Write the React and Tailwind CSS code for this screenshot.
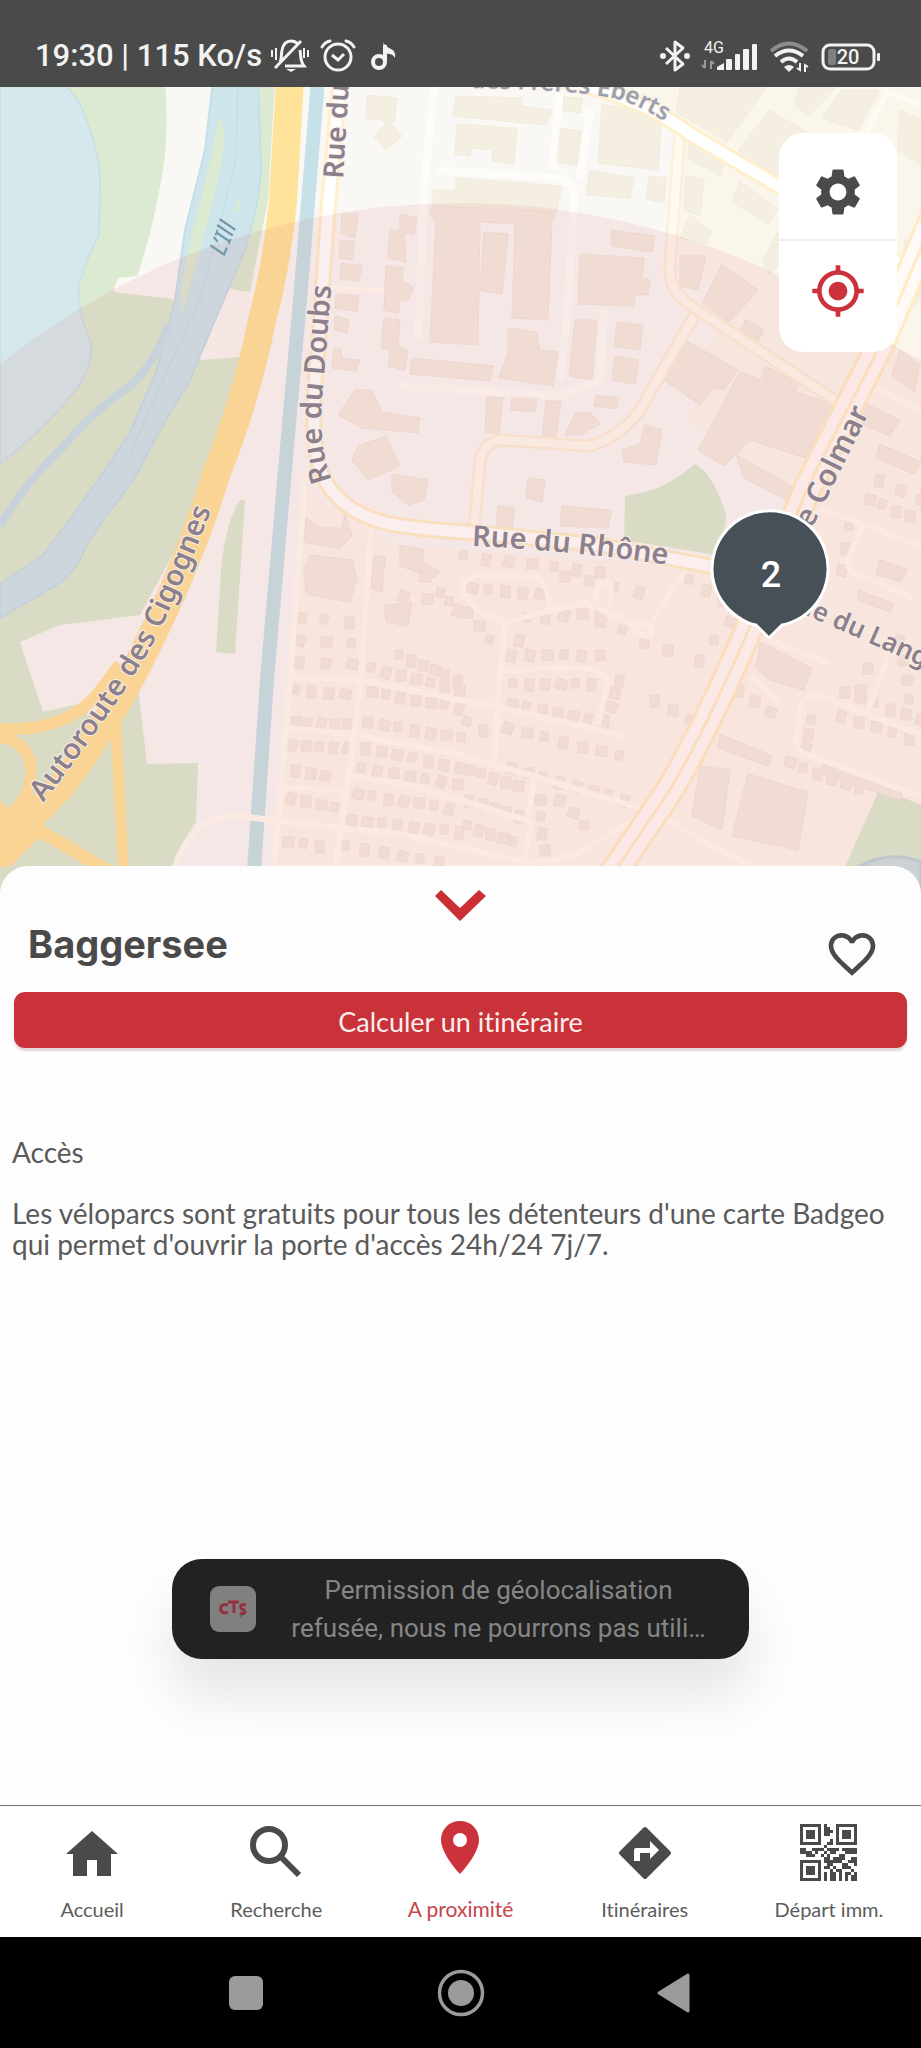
import React from "react";
import { MdSettings, MdGpsFixed, MdFavoriteBorder } from "react-icons/md";

/* ---------- Map data (user units follow the screen grid) ---------- */

const BUILDINGS_LIGHT = [
  "367,95 397,98 394,122 366,118",
  "388,120 402,136 386,150 374,137",
  "456,96 522,98 522,106 552,110 546,125 453,116",
  "457,124 517,128 514,164 492,161 493,150 472,148 470,156 455,154",
  "564,97 582,98 580,113 563,110",
  "560,128 581,131 577,166 556,162",
  "602,104 662,114 658,170 598,163",
  "590,170 634,178 630,198 586,195",
  "649,176 666,178 664,203 646,199",
  "456,178 562,186 556,212 432,206 434,190 456,190",
  "680,88 765,88 728,142 676,112",
  "770,110 806,132 780,180 738,150",
  "690,140 726,158 720,176 688,158",
  "686,176 704,180 700,215 684,210",
  "740,182 778,208 768,224 732,202",
  "800,88 836,88 808,116 794,104",
  "842,90 880,90 858,130 822,118",
  "690,215 712,232 706,244 680,238",
  "900,110 921,120 921,165 898,150",
  "905,240 921,246 921,300 896,320",
  "780,228 800,240 770,275 762,262",
];

const BUILDINGS_DARK = [
  "432,206 556,212 552,222 548,320 512,318 515,224 480,222 478,345 430,342 436,222 430,214",
  "484,232 508,234 502,294 480,290",
  "342,214 358,214 355,238 341,234",
  "340,240 355,242 352,260 339,258",
  "341,263 362,266 359,281 340,279",
  "336,294 359,296 357,312 335,308",
  "335,316 349,320 347,333 334,330",
  "334,348 341,350 342,358 360,360 356,371 332,368",
  "400,214 417,218 414,234 404,232 406,262 388,258 390,230 400,230",
  "386,266 404,268 402,280 414,288 408,300 400,300 398,314 384,310",
  "384,318 400,320 398,346 408,350 405,370 388,366 390,350 381,348",
  "412,358 494,366 490,381 410,374",
  "508,328 536,332 540,350 558,352 553,386 499,378 508,352",
  "611,230 655,236 652,252 612,246",
  "580,254 644,258 642,278 650,280 648,295 635,294 634,306 578,304",
  "575,320 597,320 592,380 569,376",
  "617,322 643,325 640,350 614,346",
  "615,356 639,360 635,384 612,380",
  "487,396 503,398 499,434 485,432",
  "512,396 537,398 535,412 511,410",
  "546,400 561,402 556,438 542,435",
  "575,413 590,412 600,424 582,434 565,436",
  "596,395 619,398 616,409 594,406",
  "355,390 372,390 382,412 420,418 418,433 362,428 338,415",
  "358,446 386,436 400,466 368,480 352,460",
  "392,474 428,480 424,500 408,505 392,492",
  "680,256 706,256 698,290 680,286",
  "722,265 758,290 730,322 702,303",
  "685,340 738,370 724,390 712,388 700,405 664,380",
  "740,372 834,405 806,458 750,440 724,466 698,450",
  "746,320 764,330 756,345 738,335",
  "765,366 800,384 794,392 762,378",
  "645,425 662,430 656,465 624,462 622,450 640,444",
  "498,506 515,508 512,528 496,526",
  "528,478 545,480 542,502 526,498",
  "562,506 612,510 608,528 560,526",
  "736,455 792,486 786,500 744,478",
  "306,518 322,528 342,528 345,514 352,536 340,548 304,542",
  "310,555 352,560 357,578 350,602 306,594 304,570",
  "374,555 385,557 382,592 371,588",
  "700,766 730,770 722,830 692,816",
  "748,774 808,792 798,850 732,836",
  "720,734 772,756 768,766 718,748",
  "760,642 786,655 812,668 804,690 770,680 756,668",
  "858,590 894,604 890,612 858,600",
  "880,560 908,570 900,582 876,574",
  "824,762 902,790 900,800 820,774",
  "900,350 921,360 914,392 892,376",
  "858,400 900,420 890,436 862,424",
  "880,444 921,462 914,474 876,458",
  "400,545 424,550 422,562 440,572 434,578 400,566",
  "384,606 412,602 408,626 386,622",
];

const FILLERS = [
  [400, 655, 458, 680, 6], [300, 618, 350, 622, 3], [300, 640, 352, 644, 3], [300, 662, 352, 664, 3],
  [296, 690, 345, 694, 4], [296, 722, 348, 724, 5], [292, 745, 348, 748, 5], [296, 770, 325, 776, 3],
  [372, 668, 460, 690, 7], [372, 692, 460, 708, 7], [368, 722, 462, 738, 7], [366, 748, 460, 768, 7],
  [362, 768, 458, 784, 7], [358, 794, 450, 808, 7], [352, 820, 460, 832, 8], [292, 798, 335, 808, 4],
  [464, 556, 600, 572, 7], [472, 588, 540, 594, 5], [468, 612, 490, 640, 3], [520, 640, 525, 650, 1],
  [528, 618, 600, 612, 5], [600, 622, 668, 650, 4], [565, 576, 640, 592, 4], [512, 655, 600, 655, 6],
  [514, 684, 592, 684, 6], [512, 704, 604, 722, 7], [508, 728, 620, 756, 7], [620, 680, 606, 720, 4],
  [468, 722, 484, 730, 2], [470, 770, 518, 786, 5], [512, 768, 625, 800, 8], [470, 800, 520, 816, 5],
  [468, 826, 514, 842, 5], [540, 800, 545, 850, 4], [560, 800, 585, 826, 3], [655, 700, 690, 720, 3],
  [690, 580, 740, 610, 4], [730, 622, 700, 660, 3], [845, 692, 921, 720, 6], [842, 716, 910, 738, 5],
  [812, 720, 806, 748, 3], [790, 762, 860, 790, 6], [868, 668, 860, 690, 2], [900, 640, 910, 700, 4],
  [850, 526, 842, 570, 3], [870, 500, 910, 516, 4], [408, 560, 458, 610, 4], [880, 480, 921, 500, 3],
  [346, 846, 440, 862, 6], [288, 842, 320, 846, 3], [404, 596, 450, 602, 3], [740, 690, 770, 712, 3],
];

const MINOR_ROADS = [
  "M305 478 L290 680 L274 870",
  "M371 528 L360 690 L345 800 L335 870",
  "M290 677 L360 680 L400 688 L460 700 L520 712 L625 736",
  "M287 728 L358 735 L460 755 L530 775 L652 812",
  "M282 787 L345 791",
  "M352 777 L400 783 L460 800 L532 822 L522 870",
  "M174 870 Q190 816 238 816 L340 828 L400 834 L525 862 Q560 866 600 840 L650 810",
  "M505 622 L500 672 L494 762",
  "M500 672 Q550 666 590 669 Q608 672 606 690 L598 725",
  "M462 590 Q464 574 485 575 L535 577 Q548 580 550 610",
  "M462 590 Q475 615 505 622 L585 602 L636 625 L650 625 L688 566",
  "M636 624 L652 626 L650 636 L635 634 Z",
  "M595 602 L598 582 L611 584 L610 606",
  "M535 775 L528 815",
  "M770 640 L828 664",
  "M750 676 L780 702",
  "M921 735 L820 696 Q804 692 800 712 L796 742 Q796 752 812 756 L921 797",
  "M888 658 L868 710",
  "M820 508 L921 546",
  "M862 526 L848 560 Q846 570 858 574 L912 598",
  "M665 818 Q700 840 750 866",
  "M870 385 L921 412",
  "M330 288 L384 291",
  "M921 106 L880 88",
  "M888 90 L866 132",
];

const WHITE_ROADS = [
  "M434 87 L424 190 L418 340",
  "M440 168 Q440 172 470 172 L560 178 Q576 182 574 205 L566 330 L560 380",
  "M560 90 L552 170",
  "M590 110 L580 180",
  "M400 386 L560 396 L600 380 L604 310",
];

const MAIN_ROADS = [
  "M340 80 L328 210 L318 350 Q308 440 322 474 Q338 512 390 524 Q425 530 480 533 L600 545 L720 568",
  "M560 80 Q640 96 690 134 L785 190 L921 278",
];

const SECONDARY_ROADS = [
  "M680 130 L670 265 Q668 290 690 305 L840 404",
  "M694 316 L640 410 Q622 436 590 446 L500 440 Q482 444 480 462 L474 530",
];

function houseRows() {
  return FILLERS.flatMap(([x1, y1, x2, y2, n], row) =>
    Array.from({ length: n }, (_, i) => {
      const t = n === 1 ? 0 : i / (n - 1);
      const x = Math.round(x1 + (x2 - x1) * t);
      const y = Math.round(y1 + (y2 - y1) * t);
      const w = 8 + ((i * 5 + row * 3) % 4);
      const h = 9 + ((i * 3 + row) % 4);
      return (
        <rect key={`${row}-${i}`} x={x - 5} y={y - 5} width={w} height={h} transform={`rotate(${((i * 7 + row * 11) % 24) - 4} ${x} ${y})`} />
      );
    }),
  );
}

function CityMap() {
  return (
    <svg className="absolute inset-0 h-full w-full" viewBox="0 87 921 807" preserveAspectRatio="xMidYMin slice" role="img" aria-label="Carte du quartier">
      <rect x="0" y="80" width="921" height="820" fill="#faf8f5" />
      <path d="M400 545 L318 500 L304 470 L274 900 H921 V300 L860 380 L800 500 L720 570 Z" fill="#fcf5ee" />
      <path d="M560 80 L921 80 V330 L800 500 L690 420 L720 300 L670 240 L680 130 Z" fill="#fbf6ec" />

      {/* green areas */}
      <g fill="#dcead1">
        <path d="M55 80 H165 Q169 130 163 170 Q152 235 137 276 L118 278 L113 292 L172 299 L200 360 L240 357 L216 475 L140 615 L60 625 L20 642 L43 712 L95 700 L40 800 L0 860 V440 L90 350 L70 290 L100 170 Z" />
        <path d="M255 80 H275 L268 200 L250 292 L215 288 Z" />
        <path d="M0 740 L100 712 L116 690 L138 686 L147 764 L198 763 L196 822 Q180 840 174 900 H0 Z" />
        <path d="M240 500 L245 500 L235 654 L216 652 L221 570 Q226 520 240 500 Z" />
        <path d="M625 496 L645 492 Q668 486 695 464 Q712 472 726 514 L722 556 L624 540 Z" />
        <path d="M880 788 L921 805 V900 H830 Z" />
      </g>
      <path d="M228 288 L250 293 L241 357 L205 353 Z" fill="#faf7f3" />

      {/* water */}
      <path d="M0 80 H60 Q78 96 84 114 Q99 150 100 180 L99 235 Q86 260 79 285 Q78 315 90 340 Q96 356 80 384 Q50 425 0 464 Z" fill="#d5e9ec" stroke="#cbe0e8" strokeWidth="2" />
      <path d="M213 80 L205 150 L185 230 L175 300 L165 340 L155 375 L130 432 L100 477 L68 522 L42 556 L0 584 V618 L58 584 Q76 572 86 546 L102 522 L135 478 L160 430 L190 380 L215 320 L245 250 Q259 205 261 170 L258 80 Z" fill="#cfe5ec" stroke="#c5dfe8" strokeWidth="2" />
      <path d="M168 325 Q156 362 130 386 Q92 412 62 448 Q24 484 0 526" fill="none" stroke="#c8e0ea" strokeWidth="8" />
      <path d="M238 80 L236 160 L200 300 L165 375 L130 455" fill="none" stroke="#c6dfe9" strokeWidth="2" />
      <path d="M218 116 Q230 130 219 175 Q204 240 182 312 Q178 290 195 220 Q212 160 218 116 Z" fill="#dcead1" />
      <path d="M240 195 L241 208 L234 214 Z" fill="#dcead1" />
      <path d="M318 80 L300 300 L285 470 L267 680 L252 900" fill="none" stroke="#c6e2e8" strokeWidth="14" />
      <path d="M860 866 Q890 850 921 862 V900 H850 Z" fill="#cddfe2" stroke="#bcd3dc" strokeWidth="3" />

      {/* motorway */}
      <g fill="none" stroke="#ffe39b">
        <path d="M290 80 L283 200 Q276 270 262 320 Q246 400 216 475 Q190 560 150 640 Q112 720 62 785 L-20 870" strokeWidth="28" />
        <path d="M20 820 L-10 850" strokeWidth="52" />
        <path d="M0 729 Q64 732 96 696 L120 664" strokeWidth="12" />
        <path d="M-4 736 Q32 742 31 772 Q30 800 4 820" strokeWidth="11" />
        <path d="M117 690 L116 730 L124 880" strokeWidth="11" />
        <path d="M20 820 L66 846 L110 872" strokeWidth="13" />
      </g>

      {/* buildings */}
      <g fill="#f5efe2" stroke="#f0ebdd" strokeWidth="1">
        {BUILDINGS_LIGHT.map((p) => <polygon key={p} points={p} />)}
      </g>
      <g fill="#f5ebe2" stroke="#f1e5db" strokeWidth="1">
        {BUILDINGS_DARK.map((p) => <polygon key={p} points={p} />)}
        {houseRows()}
      </g>

      {/* streets */}
      <g fill="none" strokeLinejoin="round">
        {WHITE_ROADS.map((d) => <path key={d} d={d} stroke="#fffdfb" strokeOpacity="0.7" strokeWidth="8" />)}
        {MINOR_ROADS.map((d) => <path key={d} d={d} stroke="#fffbf2" strokeWidth="6" />)}
        {SECONDARY_ROADS.map((d) => <path key={d} d={d} stroke="#fdefd8" strokeWidth="13" />)}
        {SECONDARY_ROADS.map((d) => <path key={d} d={d} stroke="#fffaf0" strokeWidth="8" />)}
        {MAIN_ROADS.map((d) => <path key={d} d={d} stroke="#ffefcb" strokeWidth="17" />)}
        {MAIN_ROADS.map((d) => <path key={d} d={d} stroke="#ffffff" strokeWidth="11" />)}
        <path d="M595 900 L655 812 Q690 764 745 638 L808 487 L880 345 L935 215" stroke="#ffecc4" strokeWidth="30" />
        <path d="M595 900 L655 812 Q690 764 745 638 L808 487 L880 345 L935 215" stroke="#fffaf8" strokeWidth="24" />
        <path d="M595 900 L655 812 Q690 764 745 638 L808 487 L880 345 L935 215" stroke="#ffecc4" strokeWidth="3" />
      </g>

      {/* search radius */}
      <circle cx="460" cy="940" r="737" fill="rgb(208,90,85)" fillOpacity="0.1" />

      {/* street names */}
      <defs>
        <path id="way-autoroute" d="M43 803 Q130 690 160 630 Q194 560 222 480" />
        <path id="way-doubs" d="M332 480 Q316 440 324 380 L334 250" />
        <path id="way-doubs-north" d="M343 179 L351 50" />
        <path id="way-rhone" d="M472 546 Q570 550 690 568" />
        <path id="way-colmar" d="M803 546 L830 492 L920 310" />
        <path id="way-languedoc" d="M780 604 L840 630 L980 692" />
        <path id="way-eberts" d="M470 88 Q590 90 624 101 Q654 112 710 150" />
      </defs>
      <g fill="#8c808c" fontFamily="'Noto Sans', 'Open Sans', sans-serif" fontWeight="600" fontSize="28" stroke="#faf0ea" strokeWidth="2" paintOrder="stroke">
        <text fontSize="29"><textPath href="#way-autoroute">Autoroute des Cigognes</textPath></text>
        <text fontSize="29"><textPath href="#way-doubs">Rue du Doubs</textPath></text>
        <text><textPath href="#way-doubs-north">Rue du</textPath></text>
        <text fontSize="29"><textPath href="#way-rhone">Rue du Rhône</textPath></text>
        <text fontSize="30"><textPath href="#way-colmar">de Colmar</textPath></text>
        <text fontSize="26"><textPath href="#way-languedoc">Rue du Languedoc</textPath></text>
        <text fontSize="24" fill="#9aa0ab"><textPath href="#way-eberts">des Frères Eberts</textPath></text>
      </g>
      <text transform="translate(224 257) rotate(-68)" fill="#6f95a6" fontFamily="'Noto Sans', sans-serif" fontStyle="italic" fontSize="24">L’Ill</text>

      {/* stop marker */}
      <path d="M769 638 L756 625 Q748 624 738 617 A58 58 0 1 1 802 617 Q790 624 782 625 Z" fill="#485057" stroke="#ffffff" strokeWidth="3" strokeLinejoin="round" />
      <text x="771" y="587" textAnchor="middle" fill="#ffffff" fontFamily="Roboto, sans-serif" fontWeight="500" fontSize="36">2</text>
    </svg>
  );
}

/* ---------- Status bar ---------- */

function StatusBar() {
  return (
    <header className="flex h-[87px] items-end justify-between bg-[#4a4a4a] pr-10 pb-[11px] pl-[35px] text-[#f2f2f2]">
      <div className="flex items-center">
        <span className="text-[31px] leading-10 font-medium">19:30 | 115 Ko/s</span>
        <svg className="ml-2 h-10 w-10" viewBox="0 0 40 40" fill="none" stroke="currentColor" strokeWidth="3" aria-hidden="true">
          <path d="M10 26 C12 23 11 18 12 14 C13 9 16 5 21 5 C24 5 26 6 28 8 M30 14 C31 20 30 25 34 30 H15" />
          <path d="M5 32 L31 5" />
          <path d="M2 14 V21 M6 12 V24 M38 14 V21 M34 12 V22" strokeWidth="2" />
          <path d="M16 33 H26 L21 36 Z" fill="currentColor" stroke="none" />
        </svg>
        <svg className="ml-2 h-10 w-10" viewBox="0 0 40 40" fill="none" stroke="currentColor" strokeWidth="3" aria-hidden="true">
          <circle cx="20" cy="21" r="13" />
          <path d="M14 19 L20 24 L26 18" />
          <path d="M4 11 Q7 6 12 5 M28 5 Q33 6 36 11" strokeLinecap="round" />
        </svg>
        <svg className="ml-2 h-10 w-8" viewBox="0 0 32 40" fill="none" stroke="currentColor" strokeWidth="4" aria-hidden="true">
          <circle cx="13" cy="26" r="6" />
          <path d="M19 26 V9" />
          <path d="M17 6 Q20 11 25 13 Q30 15 29 22 Q26 17 20 18 Z" fill="currentColor" stroke="none" />
        </svg>
      </div>

      <div className="flex items-center">
        <svg className="h-10 w-8" viewBox="0 0 32 40" fill="none" stroke="currentColor" strokeWidth="3" aria-hidden="true">
          <path d="M7 12 L24 28 L16 34 V6 L24 12 L7 28" strokeLinejoin="round" />
          <circle cx="4" cy="20" r="3" fill="currentColor" stroke="none" />
          <circle cx="28" cy="20" r="3" fill="currentColor" stroke="none" />
        </svg>
        <svg className="ml-2 h-10 w-[60px]" viewBox="0 0 60 40" fill="currentColor" aria-label="4G" role="img">
          <text x="5" y="17" fontFamily="Roboto, sans-serif" fontSize="16">4G</text>
          <path d="M6 24 V32 M3 29 L6 32 M12 33 V25 M12 25 L15 28" stroke="#9b9b9b" strokeWidth="2" fill="none" />
          <path d="M18 34 V31 L25 27 V34 Z" />
          <rect x="27" y="23" width="6" height="11" rx="1" />
          <rect x="36" y="18" width="5" height="16" rx="1" />
          <rect x="44" y="13" width="6" height="21" rx="1" />
          <rect x="53" y="8" width="5" height="26" rx="1" />
        </svg>
        <svg className="ml-2 h-10 w-11" viewBox="0 0 44 40" fill="none" stroke="currentColor" strokeWidth="4" aria-hidden="true">
          <path d="M4 15 Q22 0 40 15" stroke="#8d8d8d" />
          <path d="M8 20 Q22 9 36 20" />
          <path d="M14 26 Q22 19 30 26" />
          <path d="M17 31 Q22 27 27 31 L22 36 Z" fill="currentColor" stroke="none" />
          <path d="M33 27 V34 L30 32 M38 36 V29 L41 31" strokeWidth="2" />
        </svg>
        <svg className="ml-2 h-10 w-[62px]" viewBox="0 0 62 40" aria-label="Batterie 20 %" role="img">
          <rect x="4" y="9" width="51" height="24" rx="7" fill="none" stroke="currentColor" strokeWidth="3" />
          <rect x="9" y="13" width="8" height="16" rx="2" fill="#808080" />
          <rect x="58" y="17" width="3" height="8" rx="1" fill="currentColor" />
          <text x="29" y="28" textAnchor="middle" fill="currentColor" fontFamily="Roboto, sans-serif" fontWeight="500" fontSize="20">20</text>
        </svg>
      </div>
    </header>
  );
}

/* ---------- Tab bar ---------- */

const QR_ROWS = [
  "1111111010001111111",
  "1000001011001000001",
  "1011101011101011101",
  "1011101011001011101",
  "1011101000001011101",
  "1000001000101000001",
  "1111111001101111111",
  "0000000010000000000",
  "1100111101111011111",
  "1111010010110001111",
  "0011100101000110000",
  "0000000011011110011",
  "1111111011111100111",
  "1000001001100011001",
  "1011101011010011100",
  "1011101000101100010",
  "1011101010110101101",
  "1000001010110101011",
  "1111111010110101011",
];

function QrIcon() {
  return (
    <svg className="h-16 w-16" viewBox="0 0 64 64" fill="#4a4a4a" shapeRendering="crispEdges" aria-hidden="true">
      {QR_ROWS.flatMap((row, y) =>
        [...row].map((c, x) => (c === "1" ? <rect key={`${x}-${y}`} x={3 + x * 3} y={3 + y * 3} width="3" height="3" /> : null)),
      )}
    </svg>
  );
}

const TABS = [
  {
    label: "Accueil",
    icon: (
      <svg className="h-16 w-16" viewBox="0 0 64 64" fill="#4a4a4a" aria-hidden="true">
        <path d="M32 10 L58 33 H51 V55 H37 V39 H27 V55 H13 V33 H6 Z" />
      </svg>
    ),
  },
  {
    label: "Recherche",
    icon: (
      <svg className="h-16 w-16" viewBox="0 0 64 64" fill="none" stroke="#4a4a4a" aria-hidden="true">
        <circle cx="25" cy="24" r="16" strokeWidth="6" />
        <path d="M37 36 L55 54" strokeWidth="6" />
      </svg>
    ),
  },
  {
    label: "A proximité",
    active: true,
    icon: (
      <svg className="h-16 w-16" viewBox="0 0 64 64" aria-hidden="true">
        <path fillRule="evenodd" fill="#cb323b" d="M32 0 C21 0 13 8 13 19 C13 33 32 53 32 53 C32 53 51 33 51 19 C51 8 43 0 32 0 Z M32 12 A7 7 0 1 1 32 26 A7 7 0 1 1 32 12 Z" />
      </svg>
    ),
  },
  {
    label: "Itinéraires",
    icon: (
      <svg className="h-16 w-16" viewBox="0 0 64 64" aria-hidden="true">
        <path d="M32 8 L56 32 L32 56 L8 32 Z" fill="#4a4a4a" stroke="#4a4a4a" strokeWidth="4" strokeLinejoin="round" />
        <path d="M21 40 V29 Q21 27 23 27 H37 V20 L46 29 L37 38 V32 H27 V40 Z" fill="#ffffff" />
      </svg>
    ),
  },
  { label: "Départ imm.", icon: <QrIcon /> },
];

function TabBar() {
  return (
    <nav className="grid h-[132px] grid-cols-5 border-t border-[#707070] bg-white pt-[15px]">
      {TABS.map((tab) => (
        <a
          key={tab.label}
          href="#"
          aria-current={tab.active ? "page" : undefined}
          className={`flex flex-col items-center gap-3 font-['Lato',sans-serif] leading-6 [font-variant-ligatures:none] ${tab.active ? "text-[21px] text-[#c4454c]" : "text-[20px] text-[#5c5c5c]"}`}
        >
          {tab.icon}
          {tab.label}
        </a>
      ))}
    </nav>
  );
}

function SystemBar() {
  return (
    <footer className="flex h-[111px] items-center justify-center gap-[150px] bg-black text-[#9b9b9b]">
      <button type="button" aria-label="Applications récentes">
        <svg className="h-16 w-16" viewBox="0 0 64 64" fill="currentColor"><rect x="14" y="15" width="34" height="34" rx="6" /></svg>
      </button>
      <button type="button" aria-label="Écran d’accueil">
        <svg className="h-16 w-16" viewBox="0 0 64 64" fill="currentColor">
          <circle cx="32" cy="32" r="21.500" fill="none" stroke="currentColor" strokeWidth="3.500" />
          <circle cx="32" cy="32" r="13" />
        </svg>
      </button>
      <button type="button" aria-label="Retour">
        <svg className="h-16 w-16" viewBox="0 0 64 64" fill="currentColor" stroke="currentColor" strokeWidth="3" strokeLinejoin="round">
          <path d="M16 32 L45 14 V50 Z" />
        </svg>
      </button>
    </footer>
  );
}

function Toast() {
  return (
    <div className="absolute inset-x-0 bottom-[146px] flex justify-center">
      <div role="status" className="flex w-[577px] items-center rounded-[30px] bg-[#222222] py-3 pr-9 pl-[38px] shadow-[0_38px_50px_rgba(0,0,0,0.09)]">
        <svg className="h-[46px] w-[46px] shrink-0" viewBox="0 0 46 46" role="img" aria-label="CTS">
          <rect width="46" height="46" rx="9" fill="#808080" />
          <g fill="none" stroke="#95303a" strokeWidth="3">
            <path d="M18 19 C12 17 10 21 11 24 C12 28 16 27 18 26" />
            <path d="M18 16 H29 M24 16 V27" />
            <path d="M36 19 C31 17 29 21 32 23 C37 25 35 29 30 27" />
          </g>
          <path d="M29 30 L33 28 L31 32 Z" fill="#4f6d55" />
        </svg>
        <p className="flex-1 pl-7 text-center font-['Roboto',sans-serif] text-[26px] leading-[38px] text-[#868686]">
          Permission de géolocalisation
          <br />
          refusée, nous ne pourrons pas utili…
        </p>
      </div>
    </div>
  );
}

export default function App() {
  return (
    <div className="flex min-h-screen flex-col bg-[#fdfdfd] font-['Roboto',sans-serif]">
      <StatusBar />

      <main className="flex flex-1 flex-col">
        <section className="relative h-[807px] overflow-hidden">
          <CityMap />
          <div className="absolute top-[46px] right-6 flex w-[118px] flex-col divide-y-2 divide-[#efefef] rounded-[24px] bg-white">
            <button type="button" aria-label="Réglages" className="flex h-[108px] items-center justify-center pt-3 text-[#4a4a4a]">
              <MdSettings className="h-14 w-14" />
            </button>
            <button type="button" aria-label="Ma position" className="flex h-[111px] items-center justify-center pb-3 text-[#cb323b]">
              <MdGpsFixed className="h-14 w-14" />
            </button>
          </div>
        </section>

        <section className="relative -mt-7 flex-1 rounded-t-[28px] bg-[#fdfdfd] font-['Lato',sans-serif] text-[#4a4a4a] [font-variant-ligatures:none]">
          <button type="button" aria-label="Réduire le panneau" className="mx-auto block pt-5">
            <svg className="h-9 w-14" viewBox="0 0 56 36" fill="#cb2f33"><path d="M2 10 L8 4 L27 22 L46 4 L53 10 L27 35 Z" /></svg>
          </button>
          <div className="flex items-start justify-between pr-[41px] pl-7">
            <h1 className="font-['Inter',sans-serif] text-[38px] leading-[44px] font-bold">Baggersee</h1>
            <button type="button" aria-label="Ajouter aux favoris" className="mt-1">
              <MdFavoriteBorder className="h-14 w-14" />
            </button>
          </div>
          <div className="px-[14px] pt-[10px]">
            <button type="button" className="block h-14 w-full rounded-[11px] bg-[#c93239] pt-1 text-[27px] text-[#fdeeee] shadow-[0_3px_2px_rgba(120,0,0,0.16)]">
              Calculer un itinéraire
            </button>
          </div>
          <div className="px-3 pt-[89px] text-[28px] leading-[31px] text-[#5a5a5a]">
            <h2>Accès</h2>
            <p className="pt-[30px]">
              Les véloparcs sont gratuits pour tous les détenteurs d'une carte Badgeo qui permet d'ouvrir la porte d'accès 24h/24 7j/7.
            </p>
          </div>
          <Toast />
        </section>
      </main>

      <TabBar />
      <SystemBar />
    </div>
  );
}
